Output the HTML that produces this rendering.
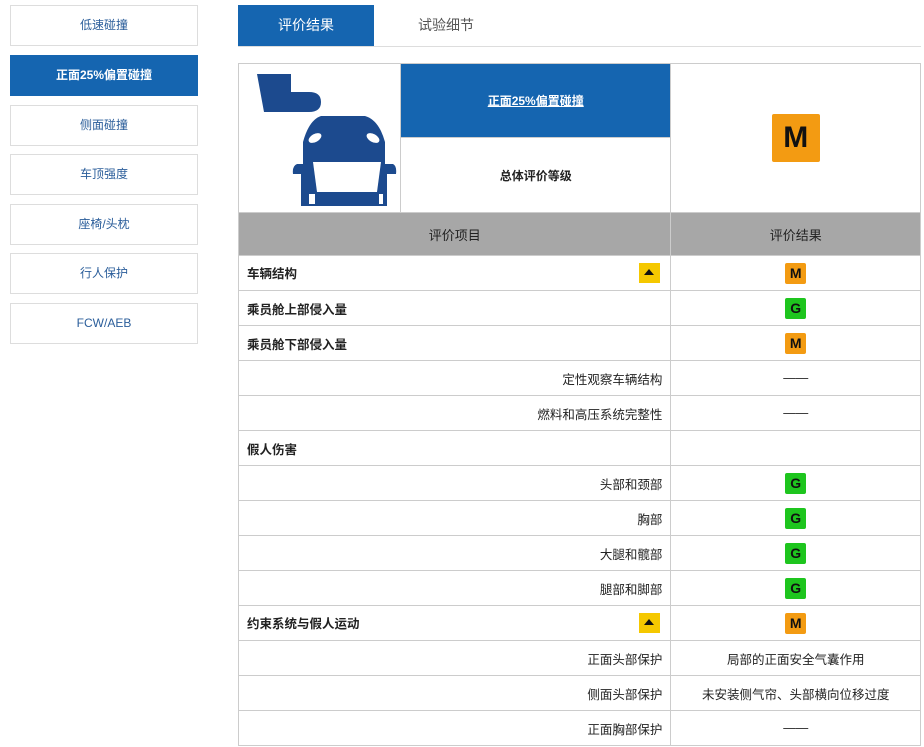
<!DOCTYPE html><html><head><meta charset="utf-8"><style>
*{margin:0;padding:0;box-sizing:border-box}
body{width:924px;height:747px;background:#fff;font-family:"Liberation Sans","Noto Sans CJK SC",sans-serif;font-size:13px;color:#222;position:relative;overflow:hidden}
.sb{position:absolute;left:10px;width:188px;height:41px;border:1px solid #ddd;background:#fff;color:#2a5d9a;text-align:center;line-height:39px;font-size:12px}
.sb.a{background:#1565b0;color:#fff;border-color:#1565b0;font-weight:bold}
.tab{position:absolute;top:5px;height:41px;width:136px;text-align:center;line-height:41px;font-size:14px}
table{position:absolute;left:238px;top:63px;width:683px;border-collapse:collapse}
td{border:1px solid #ccc;height:35px;font-size:12.5px}
.b{font-weight:bold;padding-left:8px}
.r{text-align:right;padding-right:8px}
.c{text-align:center}
.g{display:inline-block;width:21px;height:21px;border-radius:2px;font-weight:bold;font-size:14px;line-height:21px;text-align:center;color:#111;vertical-align:middle}
.M{background:#f39b12}.G{background:#1ec51e}
.up{float:right;margin-right:10px;width:21px;height:20px;background:#f5c800;position:relative}
.up:after{content:"";position:absolute;left:5px;top:6px;border-left:5.5px solid transparent;border-right:5.5px solid transparent;border-bottom:6px solid #111}
</style></head><body>
<div class="sb" style="top:5px">低速碰撞</div>
<div class="sb a" style="top:55px">正面25%偏置碰撞</div>
<div class="sb" style="top:105px">侧面碰撞</div>
<div class="sb" style="top:154px">车顶强度</div>
<div class="sb" style="top:204px">座椅/头枕</div>
<div class="sb" style="top:253px">行人保护</div>
<div class="sb" style="top:303px">FCW/AEB</div>
<div class="tab" style="left:238px;background:#1565b0;color:#fff">评价结果</div>
<div class="tab" style="left:378px;color:#555">试验细节</div>
<div style="position:absolute;left:238px;top:46px;width:683px;height:1px;background:#ddd"></div>
<table>
<tr><td rowspan="2" style="width:162px;height:149px;padding:0;line-height:0">
<svg width="160" height="144" viewBox="0 0 160 144" style="display:block"><path d="M18 8H52V26H70Q82 26 82 36Q82 46 70 46H25Z" fill="#1c4a8e"/>
<path d="M82 50H126Q140 54 146 76V98H154Q158 100 157 108H148V140H62V108H54Q53 100 58 98H64V76Q70 54 82 50Z" fill="#1c4a8e"/>
<path d="M74 96H142L138 126H78Z" fill="#fff"/><path d="M72 128L76 140H138L142 128Z" fill="#fff" opacity="0"/><ellipse cx="76" cy="72" rx="7" ry="4" fill="#fff" transform="rotate(-30 76 72)"/><ellipse cx="134" cy="72" rx="7" ry="4" fill="#fff" transform="rotate(30 134 72)"/><rect x="70" y="128" width="6" height="10" fill="#fff"/><rect x="140" y="128" width="4" height="10" fill="#fff"/></svg></td>
<td style="width:271px;height:74px;background:#1565b0;color:#fff;font-weight:bold;text-align:center;font-size:12px;text-decoration:underline">正面25%偏置碰撞</td>
<td rowspan="2" class="c" style="width:250px"><span class="g M" style="width:48px;height:48px;line-height:48px;font-size:30px">M</span></td></tr>
<tr><td class="c" style="height:75px;font-weight:bold;font-size:12px">总体评价等级</td></tr>
<tr style="background:#a7a7a7"><td colspan="2" class="c" style="height:43px;font-size:13px">评价项目</td><td class="c" style="font-size:13px">评价结果</td></tr>
<tr><td colspan="2" class="b">车辆结构<span class="up"></span></td><td class="c"><span class="g M">M</span></td></tr>
<tr><td colspan="2" class="b">乘员舱上部侵入量</td><td class="c"><span class="g G">G</span></td></tr>
<tr><td colspan="2" class="b">乘员舱下部侵入量</td><td class="c"><span class="g M">M</span></td></tr>
<tr><td colspan="2" class="r">定性观察车辆结构</td><td class="c">——</td></tr>
<tr><td colspan="2" class="r">燃料和高压系统完整性</td><td class="c">——</td></tr>
<tr><td colspan="2" class="b">假人伤害</td><td></td></tr>
<tr><td colspan="2" class="r">头部和颈部</td><td class="c"><span class="g G">G</span></td></tr>
<tr><td colspan="2" class="r">胸部</td><td class="c"><span class="g G">G</span></td></tr>
<tr><td colspan="2" class="r">大腿和髋部</td><td class="c"><span class="g G">G</span></td></tr>
<tr><td colspan="2" class="r">腿部和脚部</td><td class="c"><span class="g G">G</span></td></tr>
<tr><td colspan="2" class="b">约束系统与假人运动<span class="up"></span></td><td class="c"><span class="g M">M</span></td></tr>
<tr><td colspan="2" class="r">正面头部保护</td><td class="c">局部的正面安全气囊作用</td></tr>
<tr><td colspan="2" class="r">侧面头部保护</td><td class="c">未安装侧气帘、头部横向位移过度</td></tr>
<tr><td colspan="2" class="r">正面胸部保护</td><td class="c">——</td></tr>
</table>
</body></html>
